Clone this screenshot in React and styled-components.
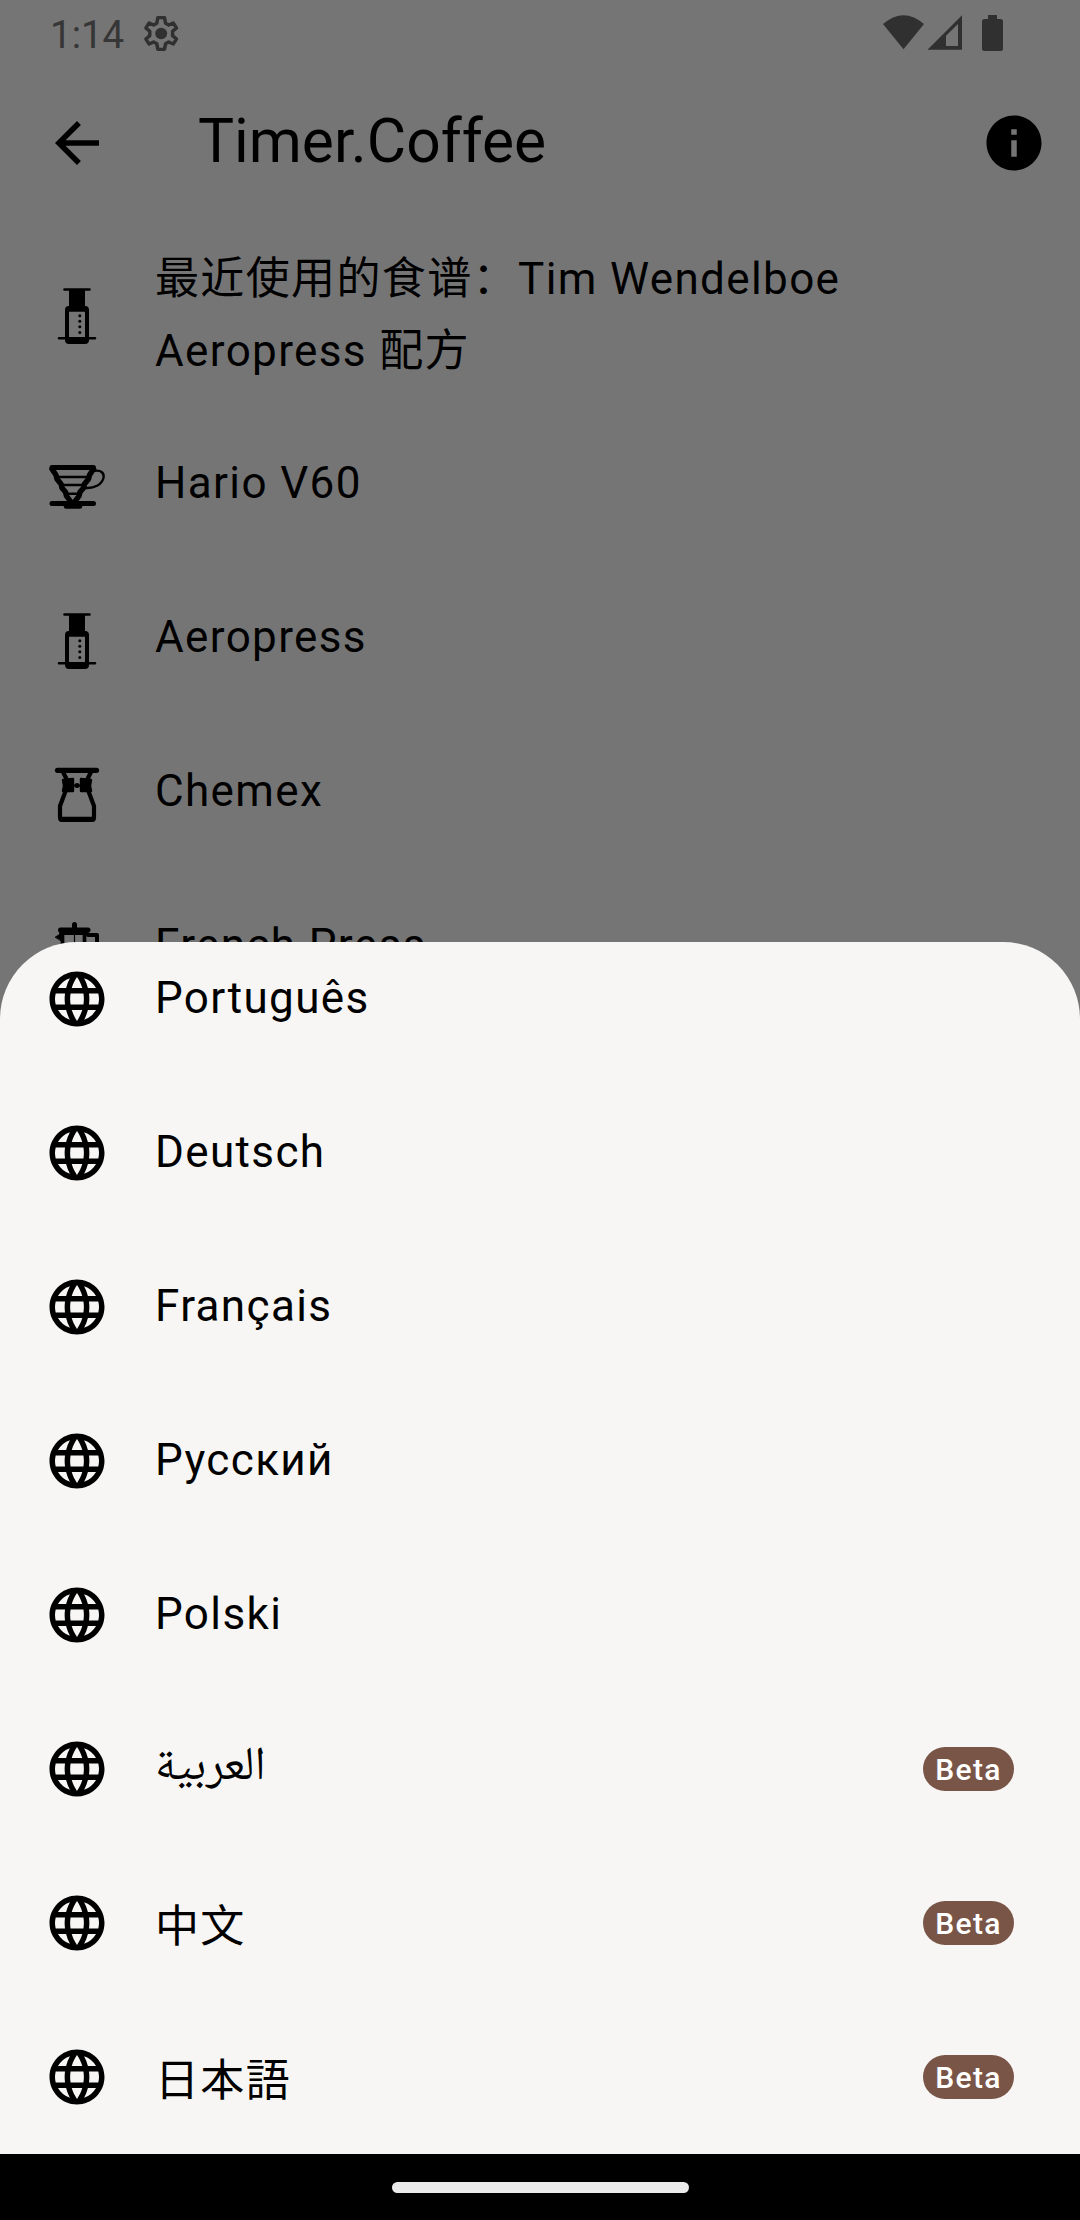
import React from "react";
import styled, { createGlobalStyle } from "styled-components";
import { MdArrowBack, MdInfo, MdLanguage } from "react-icons/md";

const GlobalStyle = createGlobalStyle`
  * { box-sizing: border-box; }
  body { margin: 0; background: #757575; }
`;

const Screen = styled.main`
  position: relative;
  display: flex;
  flex-direction: column;
  width: 1080px;
  height: 2220px;
  overflow: hidden;
  background: #757575;
  color: #000;
  font-family: Roboto, "Noto Sans CJK SC", sans-serif;
`;

const StatusBar = styled.header`
  display: flex;
  align-items: flex-start;
  justify-content: space-between;
  height: 66px;
  padding: 12px 76px 0 50px;
  color: #303030;
`;

const StatusGroup = styled.div`
  display: flex;
  align-items: flex-start;
`;

const Clock = styled.span`
  width: 92px;
  font-size: 38.5px;
  line-height: 45px;
  color: #363636;
`;

const GearIcon = styled.svg`
  width: 38px;
  height: 40px;
  margin-top: 1px;
`;

const StatusIconSet = styled.svg`
  width: 121px;
  height: 36px;
  margin-top: 3px;
`;

const AppBar = styled.div`
  display: flex;
  align-items: center;
  height: 154px;
  padding: 0 33px 0 44px;
`;

const Title = styled.h1`
  flex: 1;
  margin: 0 0 0 88px;
  padding-bottom: 3px;
  font-size: 60.5px;
  font-weight: 400;
  line-height: 76px;
`;

const Rows = styled.ul`
  display: flex;
  flex-direction: column;
  margin: 0;
  padding: 0;
  list-style: none;
`;

const Row = styled.li`
  display: flex;
  align-items: center;
  flex: none;
  height: ${(p) => (p.$tall ? 190 : 154)}px;
  padding: ${(p) => (p.$tall ? 2 : 0)}px 66px 0 44px;

  > svg { flex: none; display: block; }
`;

const Label = styled.span`
  flex: 1;
  margin-left: 45px;
  padding-right: 100px;
  padding-bottom: ${(p) => p.$lift || 0}px;
  padding-top: ${(p) => p.$drop || 0}px;
  font-family: Roboto, ${(p) => p.$fallback || '"Noto Sans CJK SC"'}, sans-serif;
  font-size: ${(p) => p.$size || 44}px;
  line-height: 72px;
  letter-spacing: 1.375px;
`;

const Sheet = styled.section`
  position: absolute;
  left: 0;
  right: 0;
  top: 942px;
  height: 1212px;
  overflow: hidden;
  border-radius: 77px 77px 0 0;
  background: #f7f6f4;
`;

const SheetRows = styled(Rows)`
  margin-top: -20px;
`;

const Badge = styled.span`
  display: flex;
  align-items: center;
  justify-content: center;
  width: 91px;
  height: 44px;
  padding-top: 2px;
  border-radius: 22px;
  background: #795548;
  color: #fff;
  font-size: 30px;
  font-weight: 500;
  line-height: 42px;
  letter-spacing: 1.375px;
`;

const NavBar = styled.footer`
  display: flex;
  align-items: center;
  justify-content: center;
  height: 66px;
  margin-top: auto;
  background: #000;
`;

const Handle = styled.div`
  width: 297px;
  height: 11px;
  border-radius: 6px;
  background: #ebebeb;
`;

const Gear = () => (
  <GearIcon viewBox="397 39 108 120" preserveAspectRatio="none">
    <path
      d="M442 53H461L464 70L473 75L486 69L495 84L484 94V107L495 117L486 132L473 126L464 131L461 148H442L439 131L430 126L417 132L408 117L419 107V94L408 84L417 69L430 75L439 70Z"
      fill="none" stroke="currentColor" strokeWidth="10" strokeLinejoin="round"
    />
    <circle cx="451.5" cy="100.5" r="17" fill="currentColor" />
  </GearIcon>
);

const StatusIcons = () => (
  <StatusIconSet viewBox="0 0 121 36" fill="currentColor">
    <path d="M0 9Q20.5-8.5 41 9L20.5 34.3Z" />
    <path fillRule="evenodd" d="M44.5 34.8L79 0.3V34.8ZM63 20.8V31H75V9Z" />
    <path d="M105 0H114V4H117.5Q120 4 120 6.5V33.5Q120 36 117.5 36H101.5Q99 36 99 33.5V6.5Q99 4 101.5 4H105Z" />
  </StatusIconSet>
);

const Aeropress = () => (
  <svg width="66" height="66" viewBox="0 0 66 66">
    <path d="M20.5 6.5H45.5M15 55.3H51" stroke="#000" strokeWidth="2.6" strokeLinecap="round" />
    <path d="M25 6H41V26H25Z" />
    <path fillRule="evenodd" d="M24 23H42Q45 23.5 45 27V57Q45 61 41 61H25Q21 61 21 57V27Q21 23.5 24 23ZM25 28.7V54H41V28.7Z" />
    {[32.7, 38.3, 43.8, 49.5].map((y) => <circle key={y} cx="35.8" cy={y} r="1.5" />)}
  </svg>
);

const HarioV60 = () => (
  <svg width="66" height="66" viewBox="0 0 66 66" stroke="#000" fill="none" strokeLinecap="round" strokeLinejoin="round">
    <path d="M8 13.5H49.5M8 49.5H49.5" strokeWidth="5" />
    <path d="M22 52.5H36" strokeWidth="4.5" />
    <path d="M8 15L12 21L13 25L17 30L18 34L21.5 38L22.5 42L27 48M49.5 15L45.5 21L44.5 25L40.5 30L39.5 34L36 38L35 42L30.5 48" strokeWidth="5.4" />
    <path d="M13 23H45M17 31H41M21 39.7H37" strokeWidth="2.4" />
    <path d="M51 16.8C57 16 60.5 19 59.5 24C57.5 31 50 34.5 42 34" strokeWidth="2.4" />
  </svg>
);

const Chemex = () => (
  <svg width="66" height="66" viewBox="0 0 66 66" stroke="#000" fill="none" strokeLinecap="round" strokeLinejoin="round">
    <path d="M13.5 8.3H52.5" strokeWidth="5.2" />
    <path d="M19 10L23 18M47 10L43 18M22 28L16 44V55Q16 58 19 58H47Q50 58 50 55V44L44 28" strokeWidth="4.2" />
    <path d="M17 57.3H49" strokeWidth="5" />
    <path d="M19 18L29 17V29L19 29L20 24ZM47 18L37 17V29L47 29L46 24Z" fill="#000" strokeWidth="2.4" />
    <path d="M29 23.5H37" strokeWidth="1.8" />
    <circle cx="33" cy="23.5" r="2.5" fill="#000" stroke="none" />
  </svg>
);

const FrenchPress = () => (
  <svg width="66" height="66" viewBox="0 0 66 66" stroke="#000" fill="none" strokeLinecap="round" strokeLinejoin="round">
    <path d="M30.5 8.5V13" strokeWidth="5" />
    <path d="M16.5 14H44" strokeWidth="5" />
    <path d="M17 17H43" strokeWidth="4" />
    <path d="M18.5 16V58H40.5V16" strokeWidth="3.7" />
    <path d="M30.5 17V56" strokeWidth="1.2" />
    <path d="M44 19H53V48H42" strokeWidth="4" />
    <path d="M11.5 21L18 17V25Z" fill="#000" strokeWidth="1" />
  </svg>
);

const brewingMethods = [
  { name: "最近使用的食谱：Tim Wendelboe Aeropress 配方", Icon: Aeropress, tall: true },
  { name: "Hario V60", Icon: HarioV60 },
  { name: "Aeropress", Icon: Aeropress },
  { name: "Chemex", Icon: Chemex },
  { name: "French Press", Icon: FrenchPress },
];

const languages = [
  { name: "Português", code: "pt" },
  { name: "Deutsch", code: "de" },
  { name: "Français", code: "fr" },
  { name: "Русский", code: "ru" },
  { name: "Polski", code: "pl" },
  { name: "العربية", code: "ar", beta: true, lift: 13, size: 47, fallback: '"Noto Naskh Arabic", "Noto Sans Arabic", "DejaVu Sans"' },
  { name: "中文", code: "zh", beta: true, drop: 8 },
  { name: "日本語", code: "ja", beta: true, drop: 8, fallback: '"Noto Sans CJK JP"' },
];

export default function App() {
  return (
    <Screen>
      <GlobalStyle />
      <StatusBar>
        <StatusGroup>
          <Clock>1:14</Clock>
          <Gear />
        </StatusGroup>
        <StatusIcons />
      </StatusBar>
      <AppBar>
        <MdArrowBack size={66} />
        <Title>Timer.Coffee</Title>
        <MdInfo size={66} />
      </AppBar>
      <Rows>
        {brewingMethods.map(({ name, Icon, tall }) => (
          <Row key={name} $tall={tall}>
            <Icon />
            <Label $lift={tall ? 2 : 8}>{name}</Label>
          </Row>
        ))}
      </Rows>
      <Sheet>
        <SheetRows>
          {languages.map(({ name, code, beta, lift, drop, size, fallback }) => (
            <Row key={code}>
              <MdLanguage size={66} />
              <Label lang={code} $lift={lift ?? (drop ? 0 : 2)} $drop={drop} $size={size} $fallback={fallback}>{name}</Label>
              {beta && <Badge>Beta</Badge>}
            </Row>
          ))}
        </SheetRows>
      </Sheet>
      <NavBar>
        <Handle />
      </NavBar>
    </Screen>
  );
}
